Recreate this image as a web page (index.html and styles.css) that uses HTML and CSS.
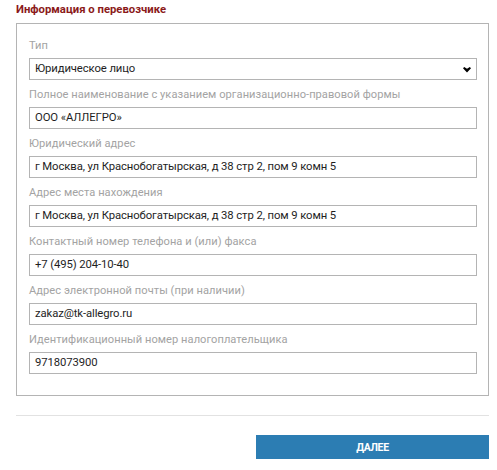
FILE: index.html
```html
<!DOCTYPE html>
<html lang="ru">
<head>
<meta charset="utf-8">
<link rel="stylesheet" href="styles.css">
</head>
<body>
<div class="page">
  <h2 class="title">Информация о перевозчике</h2>
  <div class="box">
    <div class="field">
      <div class="label">Тип</div>
      <div class="input select">
        <span>Юридическое лицо</span>
        <svg class="caret" width="8" height="6" viewBox="0 0 8 6"><path d="M0 1.3 L1.2 0 L4 1.8 L6.8 0 L8 1.3 L4 5.5 Z" fill="#000"/></svg>
      </div>
    </div>
    <div class="field">
      <div class="label">Полное наименование с указанием организационно-правовой формы</div>
      <div class="input">ООО «АЛЛЕГРО»</div>
    </div>
    <div class="field">
      <div class="label">Юридический адрес</div>
      <div class="input">г Москва, ул Краснобогатырская, д 38 стр 2, пом 9 комн 5</div>
    </div>
    <div class="field">
      <div class="label">Адрес места нахождения</div>
      <div class="input">г Москва, ул Краснобогатырская, д 38 стр 2, пом 9 комн 5</div>
    </div>
    <div class="field">
      <div class="label">Контактный номер телефона и (или) факса</div>
      <div class="input">+7 (495) 204-10-40</div>
    </div>
    <div class="field">
      <div class="label">Адрес электронной почты (при наличии)</div>
      <div class="input">zakaz@tk-allegro.ru</div>
    </div>
    <div class="field">
      <div class="label">Идентификационный номер налогоплательщика</div>
      <div class="input">9718073900</div>
    </div>
  </div>
  <hr class="sep">
  <div class="actions">
    <button class="btn">ДАЛЕЕ</button>
  </div>
</div>
</body>
</html>
```

FILE: styles.css
```css
html, body {
  margin: 0;
  padding: 0;
  background: #fff;
}
body {
  font-family: Roboto, "Open Sans", sans-serif;
  color: #222;
}
.page {
  padding: 2px 8px 0 16px;
}
.title {
  margin: 0 0 6px 0;
  font-size: 11.3px;
  line-height: 15px;
  font-weight: 700;
  color: #8b1a1a;
}
.box {
  border: 1px solid #b4b4b4;
  padding: 13px 11px 21px 12px;
  display: flex;
  flex-direction: column;
  gap: 6px;
}
.field {
  display: flex;
  flex-direction: column;
  gap: 4px;
}
.label {
  font-size: 11.1px;
  line-height: 17px;
  letter-spacing: 0.05px;
  color: #a3a3a3;
  white-space: nowrap;
}
.input {
  height: 20px;
  border: 1px solid #b4b4b4;
  padding: 0 5px;
  font-size: 11.3px;
  line-height: 20px;
  letter-spacing: -0.1px;
  color: #1e1e1e;
  white-space: nowrap;
  display: flex;
  align-items: center;
}
.select {
  justify-content: space-between;
  padding-right: 5px;
}
.caret {
  margin-top: 1px;
}
.sep {
  margin: 19px 0 0 0;
  border: 0;
  border-top: 1px solid #e2e2e2;
  height: 0;
}
.actions {
  display: flex;
  justify-content: flex-end;
  padding-top: 19px;
}
.btn {
  width: 233px;
  height: 24px;
  border: 0;
  background: #2c7db3;
  color: #fff;
  font-family: Roboto, sans-serif;
  font-weight: 700;
  font-size: 10.5px;
  letter-spacing: -0.4px;
  padding: 0;
}
```
